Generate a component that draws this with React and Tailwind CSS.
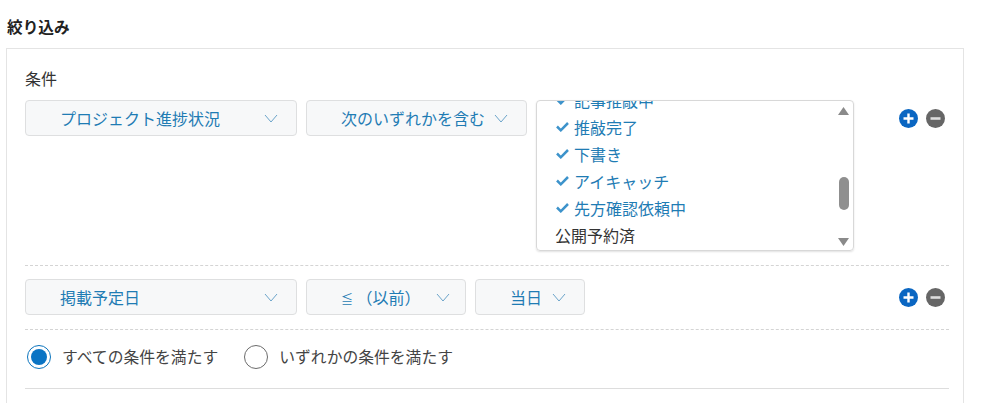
import React from "react";

const FONT = "font-['Noto_Sans_CJK_JP','Noto_Sans',sans-serif]";

const Chevron = () => (
  <svg width="14" height="9" viewBox="0 0 14 9" fill="none" className="shrink-0">
    <path d="M1 1l6 7 6-7" stroke="#6ba4ca" strokeWidth="1" />
  </svg>
);

const Select = ({ label, width, pr = "pr-[18px]" }) => (
  <div
    className={`flex h-9 items-center justify-between rounded-[4px] border border-[#dedfe0] bg-[#f7f8f9] pl-[34px] text-[16px] text-[#1f7cb4] ${width} ${pr}`}
  >
    <span className="whitespace-nowrap">{label}</span>
    <Chevron />
  </div>
);

const RoundButtons = () => (
  <div className="ml-auto mr-[4px] flex h-9 items-center gap-[8px]">
    <svg width="19" height="19" viewBox="0 0 19 19">
      <circle cx="9.5" cy="9.5" r="9.5" fill="#0a66c2" />
      <path d="M9.5 4.5v10M4.5 9.5h10" stroke="#fff" strokeWidth="2.4" />
    </svg>
    <svg width="19" height="19" viewBox="0 0 19 19">
      <circle cx="9.5" cy="9.5" r="9.5" fill="#666" />
      <path d="M4.5 9.5h10" stroke="#ddd" strokeWidth="2.6" />
    </svg>
  </div>
);

const Option = ({ label, checked }) => (
  <div className={`flex h-[27px] items-center pl-[19px] text-[16px] ${checked ? "text-[#1f7cb4]" : "text-[#333]"}`}>
    {checked && (
      <svg width="13" height="11" viewBox="0 0 13 11" className="mr-[5px] shrink-0">
        <path d="M1 5.5l3.8 3.8L12 2" fill="none" stroke="#3d93cb" strokeWidth="2.5" />
      </svg>
    )}
    <span className={checked ? "whitespace-nowrap" : "-ml-px whitespace-nowrap"}>{label}</span>
  </div>
);

const ListBox = () => (
  <div className="flex h-[151px] w-[318px] overflow-hidden rounded-[4px] border border-[#d8d8d8] shadow-[0_1px_2px_rgba(0,0,0,0.12)]">
    <div className="min-w-0 flex-1 overflow-hidden">
      <div className="mt-[-15px]">
        <Option label="記事推敲中" checked />
        <Option label="推敲完了" checked />
        <Option label="下書き" checked />
        <Option label="アイキャッチ" checked />
        <Option label="先方確認依頼中" checked />
        <Option label="公開予約済" />
      </div>
    </div>
    <div className="mr-[1px] flex w-[17px] shrink-0 flex-col items-center pb-[4px] pt-[6px]">
      <svg width="11" height="8" viewBox="0 0 11 8" className="shrink-0">
        <path d="M5.5 0l5.5 8H0z" fill="#8a8a8a" />
      </svg>
      <div className="mt-[62px] h-[33px] w-[10px] rounded-[5px] bg-[#8f8f8f]" />
      <svg width="11" height="8" viewBox="0 0 11 8" className="mt-auto shrink-0">
        <path d="M5.5 8L11 0H0z" fill="#8a8a8a" />
      </svg>
    </div>
  </div>
);

const Radio = ({ label, checked }) => (
  <div className="flex items-center gap-[11px]">
    <span
      className={`flex h-6 w-6 items-center justify-center rounded-full border ${
        checked ? "border-[#0b74bd]" : "border-[#6b6b6b]"
      }`}
    >
      {checked && <span className="h-4 w-4 rounded-full bg-[#0a74c4]" />}
    </span>
    <span className="whitespace-nowrap text-[15.8px] text-[#444]">{label}</span>
  </div>
);

export default function App() {
  return (
    <div className={`h-[403px] w-[1000px] overflow-hidden bg-white ${FONT}`}>
      <h2 className="pl-[7px] pt-[17px] text-[15.7px] leading-[20px] font-bold text-[#222]">絞り込み</h2>
      <div className="ml-[6px] mt-[11px] h-[400px] w-[958px] border border-[#e4e4e4] pl-[18px] pr-[14px] pt-[18px]">
        <p className="text-[16px] leading-[22px] text-[#333]">条件</p>
        <div className="mt-[11px] flex items-start gap-[9px] border-b border-dashed border-[#d4d4d4] pb-[14px]">
          <Select label="プロジェクト進捗状況" width="w-[272px]" />
          <Select label="次のいずれかを含む" width="w-[221px]" />
          <ListBox />
          <RoundButtons />
        </div>
        <div className="flex items-center gap-[9px] border-b border-dashed border-[#d4d4d4] pb-[14px] pt-[13px]">
          <Select label="掲載予定日" width="w-[272px]" />
          <Select
            label={
              <>
                <span className="text-[12px]">≦</span> （以前）
              </>
            }
            width="w-[160px]"
            pr="pr-[15px]"
          />
          <Select label="当日" width="w-[110px]" />
          <RoundButtons />
        </div>
        <div className="flex items-center gap-[26px] border-b border-[#dddddd] pb-[19px] pl-[2px] pt-[15px]">
          <Radio label="すべての条件を満たす" checked />
          <Radio label="いずれかの条件を満たす" />
        </div>
      </div>
    </div>
  );
}
